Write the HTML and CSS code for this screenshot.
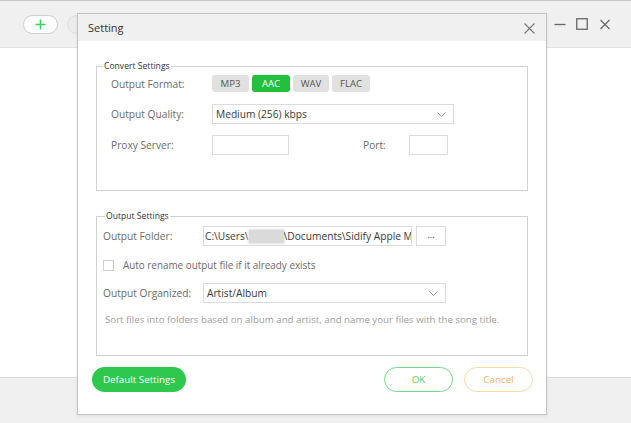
FILE: index.html
```html
<!DOCTYPE html>
<html>
<head>
<meta charset="utf-8">
<link rel="stylesheet" href="styles.css">
</head>
<body>
<div class="app">
  <div class="toolbar">
    <div class="tools">
      <div class="pill add">
        <svg width="11" height="11" viewBox="0 0 11 11"><path d="M5.5 0.5v10M0.5 5.5h10" stroke="#3fcf5c" stroke-width="1.6" fill="none"/></svg>
      </div>
      <div class="pill ghost"></div>
    </div>
    <div class="winctl">
      <svg class="dots" width="3" height="11" viewBox="0 0 3 11"><circle cx="1.5" cy="1.5" r="0.9" fill="#888"/><circle cx="1.5" cy="5.5" r="0.9" fill="#888"/><circle cx="1.5" cy="9.5" r="0.9" fill="#888"/></svg>
      <svg class="min" width="12" height="11" viewBox="0 0 12 11"><path d="M0.5 5.5h11" stroke="#666" stroke-width="1.3"/></svg>
      <svg class="max" width="12" height="12" viewBox="0 0 12 12"><rect x="0.75" y="0.75" width="10.5" height="10.5" stroke="#666" stroke-width="1.3" fill="none"/></svg>
      <svg class="cls" width="10" height="11" viewBox="0 0 10 11"><path d="M0.5 1l9 9M9.5 1l-9 9" stroke="#666" stroke-width="1.2" fill="none"/></svg>
    </div>
  </div>
  <div class="content"></div>
  <div class="bottombar"></div>
</div>

<div class="dialog">
  <div class="titlebar">
    <span class="title">Setting</span>
    <svg class="close" width="11" height="11" viewBox="0 0 11 11"><path d="M0.5 0.5l10 10M10.5 0.5l-10 10" stroke="#777" stroke-width="1.1" fill="none"/></svg>
  </div>
  <div class="dbody">
    <fieldset class="group convert">
      <legend>Convert Settings</legend>
      <div class="rows">
        <div class="row r-format">
          <span class="label">Output Format:</span>
          <div class="formats">
            <span class="fmt w37">MP3</span>
            <span class="fmt w38 on">AAC</span>
            <span class="fmt w36">WAV</span>
            <span class="fmt w38">FLAC</span>
          </div>
        </div>
        <div class="row r-quality">
          <span class="label">Output Quality:</span>
          <div class="select q">
            <span>Medium (256) kbps</span>
            <svg width="9" height="5" viewBox="0 0 9 5"><path d="M0.5 0.5l4 4 4-4" stroke="#999" fill="none"/></svg>
          </div>
        </div>
        <div class="row r-proxy">
          <span class="label">Proxy Server:</span>
          <span class="input proxy"></span>
          <span class="port-label">Port:</span>
          <span class="input port"></span>
        </div>
      </div>
    </fieldset>

    <fieldset class="group output">
      <legend>Output Settings</legend>
      <div class="rows">
        <div class="row r-folder">
          <span class="label">Output Folder:</span>
          <div class="input folder"><span class="seg">C:\Users\</span><span class="blur"></span><span class="seg rest">\Documents\Sidify Apple M</span></div>
          <span class="browse">...</span>
        </div>
        <div class="row r-check">
          <span class="checkbox"></span>
          <span class="check-text">Auto rename output file if it already exists</span>
        </div>
        <div class="row r-organized">
          <span class="label">Output Organized:</span>
          <div class="select org">
            <span>Artist/Album</span>
            <svg width="9" height="5" viewBox="0 0 9 5"><path d="M0.5 0.5l4 4 4-4" stroke="#999" fill="none"/></svg>
          </div>
        </div>
        <p class="desc">Sort files into folders based on album and artist, and name your files with the song title.</p>
      </div>
    </fieldset>

    <div class="footer">
      <span class="btn default">Default Settings</span>
      <div class="actions">
        <span class="btn ok">OK</span>
        <span class="btn cancel">Cancel</span>
      </div>
    </div>
  </div>
</div>
</body>
</html>
```

FILE: styles.css
```css
* { box-sizing: border-box; }
html, body { margin: 0; padding: 0; }
body {
  width: 631px;
  height: 423px;
  overflow: hidden;
  font-family: "Open Sans", "Noto Sans", sans-serif;
  color: #333;
  background: #fff;
  position: relative;
}
.app {
  display: flex;
  flex-direction: column;
  height: 423px;
}
.toolbar {
  height: 48px;
  background: #f0f0f0;
  border-top: 1px solid #c6c6c6;
  border-bottom: 1px solid #e2e2e2;
  display: flex;
  align-items: center;
  justify-content: space-between;
  padding: 0 21px 0 23px;
}
.tools { display: flex; gap: 9px; align-items: center; }
.pill {
  width: 35px;
  height: 19px;
  border-radius: 10px;
  border: 1px solid #cfcfcf;
  background: #fff;
  display: flex;
  align-items: center;
  justify-content: center;
}
.pill.ghost { background: #ececec; border-color: #e0e0e0; }
.winctl { display: flex; align-items: center; }
.winctl svg { display: block; }
.winctl .min { margin-left: 8px; }
.winctl .max { margin-left: 10px; }
.winctl .cls { margin-left: 12px; }

.content { flex: 1; background: #fff; }
.bottombar {
  height: 46px;
  background: #f0f0f0;
  border-top: 1px solid #dcdcdc;
}

.dialog {
  position: absolute;
  left: 77px;
  top: 13px;
  width: 470px;
  border: 1px solid #c4c4c4;
  background: #fff;
  box-shadow: 0 1px 3px rgba(0,0,0,0.08);
}
.titlebar {
  height: 27px;
  background: #f0f0f0;
  display: flex;
  align-items: center;
  justify-content: space-between;
  padding: 0 11px 0 10px;
}
.title { font-size: 11px; color: #333; }
.close { display: block; margin-top: 1px; }

.dbody { padding: 19px 0 22px; }
.group {
  margin: 0 18px;
  padding: 0;
  border: 1px solid #d2d2d2;
  min-width: 0;
}
.group legend {
  font-size: 8.6px;
  line-height: 12px;
  color: #333;
  padding: 0 1px;
  margin-left: 6px;
}
.group.output { margin-top: 19px; }
.group.output legend { margin-left: 8px; }

.rows { display: flex; flex-direction: column; }
.convert .rows { padding: 3px 0 35px 14px; }
.output .rows { padding: 4px 0 28px 6px; }

.row { display: flex; align-items: center; }
.label { font-size: 10.2px; color: #6b6b6b; flex: none; }
.convert .label { width: 101px; }
.output .label { width: 100px; }

.r-format { height: 17px; }
.r-quality { height: 20px; margin-top: 12px; }
.r-proxy { height: 20px; margin-top: 11px; }

.formats { display: flex; gap: 3px; }
.fmt {
  height: 17px;
  border-radius: 3px;
  background: #e1e1e1;
  color: #555;
  font-size: 9.6px;
  display: flex;
  align-items: center;
  justify-content: center;
}
.fmt.on { background: #22c03c; color: #fff; }
.w36 { width: 36px; }
.w37 { width: 37px; }
.w38 { width: 38px; }

.select, .input {
  height: 20px;
  border: 1px solid #dcdcdc;
  background: #fff;
  font-size: 10.2px;
  color: #3a3a3a;
  display: flex;
  align-items: center;
}
.select { justify-content: space-between; padding: 0 7px 0 3px; }
.select svg { display: block; }
.select.q { width: 242px; }
.select.org { width: 243px; }
.input.proxy { width: 77px; }
.port-label { font-size: 10.2px; color: #6b6b6b; margin-left: 74px; width: 46px; }
.input.port { width: 39px; }

.r-folder { height: 20px; }
.input.folder {
  width: 209px;
  padding-left: 1px;
  overflow: hidden;
}
.seg { white-space: nowrap; flex: none; }
.seg.rest { flex: 1 1 auto; min-width: 0; overflow: hidden; }
.blur {
  display: inline-block;
  width: 35px;
  height: 13px;
  background: #dadada;
  box-shadow: 0 0 2px 1px #e4e4e4;
  flex: none;
}
.browse {
  width: 30px;
  height: 20px;
  margin-left: 4px;
  border: 1px solid #dcdcdc;
  font-size: 9px;
  color: #333;
  display: flex;
  align-items: center;
  justify-content: center;
  padding-bottom: 3px;
}
.r-check { height: 20px; margin-top: 9px; }
.checkbox {
  width: 11px;
  height: 11px;
  border: 1px solid #cfcfcf;
  background: #fff;
  margin-right: 9px;
}
.check-text { font-size: 9.9px; color: #6b6b6b; }
.r-organized { height: 20px; margin-top: 8px; }
.desc {
  margin: 10px 0 0 2px;
  font-size: 9.7px;
  line-height: 14px;
  color: #a0a0a0;
  white-space: nowrap;
}

.footer {
  margin-top: 11px;
  padding: 0 13px 0 14px;
  display: flex;
  justify-content: space-between;
  align-items: center;
}
.actions { display: flex; gap: 11px; }
.btn {
  height: 25px;
  border-radius: 13px;
  font-size: 9.8px;
  display: flex;
  align-items: center;
  justify-content: center;
}
.btn.default { width: 94px; background: #2ec84f; color: #fff; }
.btn.ok { width: 69px; border: 1px solid #74db89; color: #4cce67; }
.btn.cancel { width: 69px; border: 1px solid #fdd9a5; color: #f6b462; }
```
